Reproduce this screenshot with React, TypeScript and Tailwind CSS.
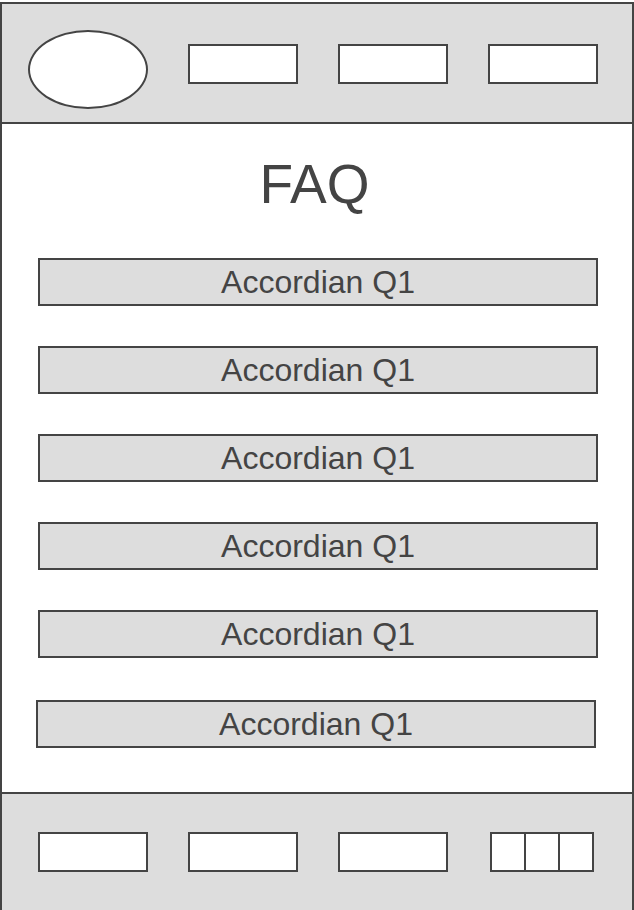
const font = { fontFamily: '"Liberation Sans", Arial, sans-serif' };

function NavBox({ className = "" }: { className?: string }) {
  return (
    <div className={`w-[110px] h-[40px] border-2 border-[#444] bg-white ${className}`}></div>
  );
}

function Accordion({ text, className = "" }: { text: string; className?: string }) {
  return (
    <div
      className={`w-[560px] h-[48px] border-2 border-[#444] bg-[#dddddd] flex items-center justify-center ${className}`}
    >
      <span className="text-[32px] leading-none text-[#444]">{text}</span>
    </div>
  );
}

export default function App() {
  const questions = ["Accordian Q1", "Accordian Q1", "Accordian Q1", "Accordian Q1", "Accordian Q1"];

  return (
    <div className="w-[634px] h-[910px] bg-white pt-[2px]" style={font}>
      <div className="h-[908px] border-2 border-b-0 border-[#444] flex flex-col">
        {/* header */}
        <header className="h-[120px] shrink-0 bg-[#dddddd] border-b-2 border-[#444] flex items-start pl-[26px] gap-[40px]">
          <div className="mt-[26px] w-[120px] h-[79px] rounded-[50%] border-2 border-[#444] bg-white"></div>
          <NavBox className="mt-[40px]" />
          <NavBox className="mt-[40px]" />
          <NavBox className="mt-[40px]" />
        </header>

        {/* faq */}
        <main className="h-[668px] shrink-0 flex flex-col items-start pt-[33px]">
          <h1 className="self-center mr-[5px] text-[55px] leading-none text-[#444]">FAQ</h1>
          <div className="mt-[46px] ml-[36px] flex flex-col gap-[40px]">
            {questions.map((q, i) => (
              <Accordion key={i} text={q} />
            ))}
          </div>
          <Accordion text="Accordian Q1" className="mt-[42px] ml-[34px]" />
        </main>

        {/* footer */}
        <footer className="flex-1 bg-[#dddddd] border-t-2 border-[#444] flex items-start pl-[36px] gap-[40px]">
          <NavBox className="mt-[38px]" />
          <NavBox className="mt-[38px]" />
          <NavBox className="mt-[38px]" />
          <div className="mt-[38px] ml-[2px] h-[40px] flex border-2 border-[#444] bg-white">
            <div className="w-[34px] border-r-2 border-[#444]"></div>
            <div className="w-[34px] border-r-2 border-[#444]"></div>
            <div className="w-[32px]"></div>
          </div>
        </footer>
      </div>
    </div>
  );
}
